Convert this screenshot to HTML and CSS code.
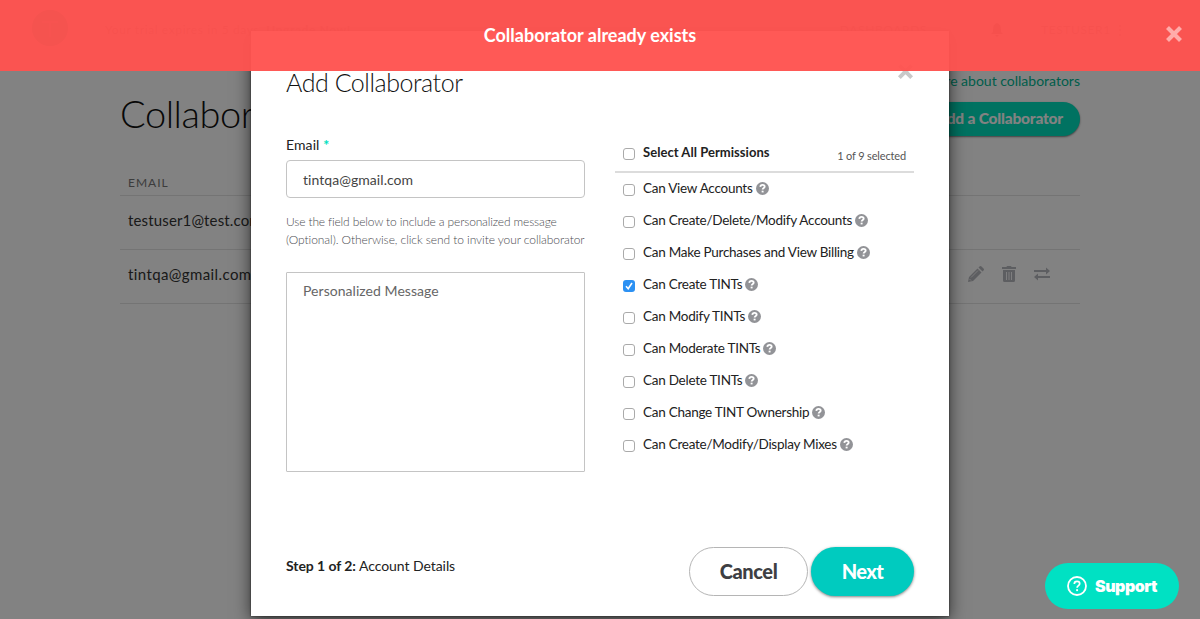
FILE: index.html
```html
<!DOCTYPE html>
<html lang="en">
<head>
<meta charset="utf-8">
<title>Collaborators</title>
<link rel="stylesheet" href="styles.css">
</head>
<body>
<svg class="defs" width="0" height="0" aria-hidden="true">
  <symbol id="help" viewBox="0 0 12 12">
    <circle cx="6" cy="6" r="6" fill="#929397"/>
    <path d="M4 4.500C4.100 3.200 5 2.700 6 2.700c1.100 0 2 .6 2 1.600C8 5.500 6.100 5.500 6.100 7" fill="none" stroke="#fff" stroke-width="1.700"/>
    <path d="M5.200 8h1.800v1.600H5.200z" fill="#fff"/>
  </symbol>
  <symbol id="cross" viewBox="0 0 18 18">
    <path d="M2.500 2.500l13 13M15.500 2.500l-13 13" fill="none" stroke="currentColor" stroke-width="4.200"/>
  </symbol>
</svg>

<div class="page">
  <header class="nav">
    <svg class="nav-logo" viewBox="0 0 36 36"><circle cx="18" cy="18" r="18" fill="#00b894"/><path d="M10 12h16M18 12v15" fill="none" stroke="#6cc" stroke-width="2.500"/></svg>
    <span class="nav-trial">Your trial expires in 5 days. <b>Upgrade Now!</b></span>
    <span class="nav-dash">DASHBOARDS</span>
    <svg class="nav-bell" viewBox="0 0 12 14"><path d="M6 0c3 1 4 3 4 6v3l2 2H0l2-2V6c0-3 1-5 4-6zM4 12h4l-2 2z" fill="#555"/></svg>
    <span class="nav-user">TESTUSER1 ⋮</span>
  </header>
  <main class="content">
    <div class="heading">
      <h1>Collaborators</h1>
      <div class="heading-side">
        <a class="learn">Learn more about collaborators</a>
        <span class="add">Add a Collaborator</span>
      </div>
    </div>
    <div class="row row-head">EMAIL</div>
    <div class="row row-tight">testuser1@test.com</div>
    <div class="row">
      <span>tintqa@gmail.com</span>
      <span class="actions">
        <svg width="16" height="16" viewBox="0 0 16 16"><path d="M0 16l1-5L9.500 2.500l4 4L5 15zM10.500 1.500l1-1q1-1 2 0l2 2q1 1 0 2l-1 1z" fill="currentColor"/><path d="M3 11.500l7-7M1.500 13l1.500 1.500" stroke="#fff" stroke-width=".8"/></svg>
        <svg width="14" height="16" viewBox="0 0 14 16"><path d="M0 1h4.500q0-1 1-1h3q1 0 1 1H14v2H0zM1 4h12v10.500q0 1.500-1.500 1.500h-9Q1 16 1 14.500z" fill="currentColor"/><path d="M4.500 6v8M7 6v8M9.500 6v8" stroke="#fff" stroke-width=".9"/></svg>
        <svg width="16" height="14" viewBox="0 0 16 14"><path d="M0 3h12V.5L16 4l-4 3.500V5H0zM16 9H4V6.500L0 10l4 3.500V11h12z" fill="currentColor"/></svg>
      </span>
    </div>
  </main>
</div>

<div class="overlay">
  <section class="modal">
    <div class="modal-head">
      <h2>Add Collaborator</h2>
      <svg class="modal-close"><use href="#cross"/></svg>
    </div>
    <div class="form">
      <div class="left">
        <label class="label">Email <span class="star">*</span></label>
        <div class="input">tintqa@gmail.com</div>
        <p class="hint">Use the field below to include a personalized message<br>(Optional). Otherwise, click send to invite your collaborator</p>
        <div class="message">Personalized Message</div>
      </div>
      <div class="right">
        <div class="select-all"><i class="box"></i><b>Select All Permissions</b><span class="count">1 of 9 selected</span></div>
        <div class="perm"><i class="box"></i><span>Can View Accounts</span><svg><use href="#help"/></svg></div>
        <div class="perm"><i class="box"></i><span>Can Create/Delete/Modify Accounts</span><svg><use href="#help"/></svg></div>
        <div class="perm"><i class="box"></i><span>Can Make Purchases and View Billing</span><svg><use href="#help"/></svg></div>
        <div class="perm"><i class="box checked"><svg class="tick" viewBox="0 0 12 12"><path d="M3 6.300l2.200 2.400L9 3" fill="none" stroke="#fff" stroke-width="1.600"/></svg></i><span>Can Create TINTs</span><svg><use href="#help"/></svg></div>
        <div class="perm"><i class="box"></i><span>Can Modify TINTs</span><svg><use href="#help"/></svg></div>
        <div class="perm"><i class="box"></i><span>Can Moderate TINTs</span><svg><use href="#help"/></svg></div>
        <div class="perm"><i class="box"></i><span>Can Delete TINTs</span><svg><use href="#help"/></svg></div>
        <div class="perm"><i class="box"></i><span>Can Change TINT Ownership</span><svg><use href="#help"/></svg></div>
        <div class="perm"><i class="box"></i><span>Can Create/Modify/Display Mixes</span><svg><use href="#help"/></svg></div>
      </div>
    </div>
    <footer class="modal-foot">
      <span class="step"><b>Step 1 of 2:</b> Account Details</span>
      <span class="btn cancel">Cancel</span>
      <span class="btn next">Next</span>
    </footer>
  </section>
</div>

<div class="toast">
  <span>Collaborator already exists</span>
  <svg class="toast-close"><use href="#cross"/></svg>
</div>

<div class="support">
  <svg width="20" height="20" viewBox="0 0 20 20" fill="none" stroke="#fff"><circle cx="10" cy="10" r="9" stroke-width="1.800"/><path d="M7.300 8c0-1.700 1.200-2.600 2.700-2.600s2.700.9 2.700 2.300c0 1.800-2.600 2-2.600 4" stroke-width="1.700"/><path d="M10.100 13.200v1.900" stroke-width="1.900"/></svg>
  <span>Support</span>
</div>
</body>
</html>
```

FILE: styles.css
```css
* { box-sizing: border-box; }
body { margin: 0; width: 1200px; height: 619px; overflow: hidden; font-family: Lato, "Open Sans", sans-serif; font-size: 14px; color: #333; background: #fff; }
h1, h2, p { margin: 0; font-weight: 300; }
svg { flex: none; }
.defs { position: absolute; }

/* page behind the dialog */
.nav { height: 59px; display: flex; align-items: center; padding: 0 73px 0 32px; letter-spacing: .6px; font-size: 12px; color: #777; }
.nav-logo { width: 36px; height: 36px; margin-top: -4px; }
.nav-trial { margin-left: 37px; }
.nav-dash { margin-left: auto; }
.nav-bell { width: 12px; height: 14px; margin: 0 38px 0 64px; }
.content { width: 960px; margin: 0 auto; }
.heading { display: flex; justify-content: space-between; height: 109px; }
h1 { font-size: 38px; line-height: 46px; padding-top: 31px; letter-spacing: -.45px; color: #111; }
.heading-side { display: flex; flex-direction: column; align-items: flex-end; padding-top: 13px; }
.learn { color: #00b894; font-size: 14px; line-height: 18px; }
.add { margin-top: 12px; height: 34px; line-height: 33px; padding: 0 17px; border-radius: 17px; background: #00e0be; color: #fff; font-size: 15.500px; font-weight: 900; letter-spacing: -.2px; box-shadow: 0 1px 2px rgba(0,0,0,.5); }
.row { height: 54px; display: flex; align-items: center; justify-content: space-between; padding: 0 30px 5px 8px; border-bottom: 1px solid #e4e4e4; font-size: 15px; letter-spacing: .4px; }
.row-tight { letter-spacing: .15px; }
.row-head { height: 28px; padding-top: 2px; padding-bottom: 0; font-size: 12px; letter-spacing: 1px; color: #777; }
.actions { display: flex; align-items: center; gap: 18px; color: #b7b8be; }

/* dialog */
.overlay { position: absolute; inset: 0; padding-top: 31px; background: rgba(0,0,0,.49); }
.modal { width: 698px; height: 585px; margin: 0 auto; padding: 35px 35px 0; display: flex; flex-direction: column; background: #fff; box-shadow: 0 4px 16px rgba(0,0,0,.65), 0 0 2px rgba(0,0,0,.6); }
.modal-head { display: flex; justify-content: space-between; height: 69px; }
h2 { font-size: 25px; line-height: 33px; letter-spacing: -.45px; color: #111; }
.modal-close { width: 17px; height: 17px; color: #c9c9c9; margin: -3px 0 0; }
.form { display: flex; gap: 30px; height: 337px; }
.left { width: 299px; }
.label { display: block; height: 25px; line-height: 20px; letter-spacing: .1px; color: #222; }
.star { color: #00dfc0; font-weight: 900; font-size: 14px; }
.input { height: 38px; line-height: 38px; padding-left: 16px; border: 1px solid #c4c4c4; border-radius: 4px; color: #444; letter-spacing: .05px; }
.hint { margin-top: 15px; font-size: 12px; line-height: 18px; letter-spacing: -.07px; color: #4c4d52; white-space: nowrap; }
.hint::first-line { letter-spacing: -.15px; }
.message { margin-top: 23px; height: 200px; padding: 8px 16px; line-height: 19px; letter-spacing: .05px; border: 1px solid #c4c4c4; border-radius: 1px; color: #666; }
.right { width: 299px; }
.select-all { display: flex; align-items: center; height: 38px; padding: 0 8px; border-bottom: 2px solid #dcdcdc; font-size: 13px; letter-spacing: .04px; }
.select-all .box { margin-top: 1px; }
.select-all b { padding-bottom: 2px; color: #222; }
.count { margin-left: auto; padding-top: 5px; font-size: 11px; letter-spacing: -.15px; color: #555; }
.box { width: 12px; height: 12px; margin-right: 8px; flex: none; border: 1px solid #aaa; border-radius: 3px; background: #fff; }
.checked { border: 0; background: #2c91f3; }
.tick { display: block; width: 12px; height: 12px; }
.perm { display: flex; align-items: center; height: 32px; padding-left: 8px; font-size: 13.500px; letter-spacing: -.26px; color: #222; }
.perm:nth-child(2) { height: 31px; padding-bottom: 1px; }
.perm:nth-child(2) .box { margin-top: 4px; }
.perm > svg { width: 13px; height: 13px; margin-left: 3px; }
.modal-foot { display: flex; align-items: center; margin-top: 75px; height: 49px; }
.perm .box { margin-top: 3px; }
.step { margin-right: auto; padding-bottom: 13px; letter-spacing: -.06px; color: #222; }
.btn { height: 49px; line-height: 49px; border-radius: 25px; text-align: center; font-size: 20px; font-weight: 700; }
.cancel { width: 119px; line-height: 47px; letter-spacing: -.4px; font-weight: 900; border: 1px solid #b5b5b5; color: #3e3f43; }
.next { width: 103px; margin-left: 3px; background: #00cbbf; color: #fff; font-weight: 900; letter-spacing: -.6px; box-shadow: 0 1px 3px rgba(0,0,0,.5); }

.toast { position: absolute; top: 0; left: 0; width: 1200px; height: 71px; display: flex; align-items: center; justify-content: center; padding: 0 20px 1px 0; background: rgba(255,82,79,.96); color: #fff; font-size: 18px; font-weight: 700; }
.toast-close { position: absolute; right: 17px; top: 25px; width: 18px; height: 18px; color: #ffacaa; }

.support { position: absolute; left: 1045px; top: 563px; width: 134px; height: 46px; border-radius: 23px; display: flex; align-items: center; gap: 8px; padding-left: 22px; background: #00e1c3; color: #fff; font: 900 16px Inter, "Liberation Sans", sans-serif; letter-spacing: -.5px; }
```
